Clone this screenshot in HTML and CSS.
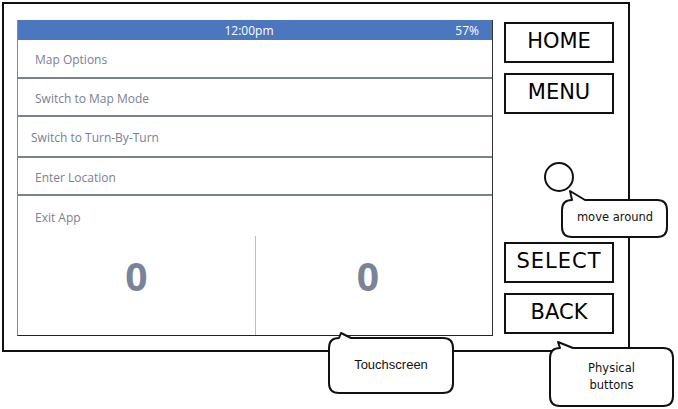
FILE: index.html
```html
<!DOCTYPE html>
<html>
<head>
<meta charset="utf-8">
<link rel="stylesheet" href="styles.css">
</head>
<body>
<div class="page">
  <div class="device">
    <div class="screen">
      <div class="status">
        <span class="time">12:00pm</span>
        <span class="battery">57%</span>
      </div>
      <div class="row r1">Map Options</div>
      <div class="row r2">Switch to Map Mode</div>
      <div class="row r3 tight">Switch to Turn-By-Turn</div>
      <div class="row r4">Enter Location</div>
      <div class="row r5 last">Exit App</div>
      <div class="counters">
        <div class="cell">0</div>
        <div class="cell right">0</div>
      </div>
    </div>
    <div class="buttons">
      <div class="btn">HOME</div>
      <div class="btn">MENU</div>
      <div class="knob"></div>
      <div class="btn select">SELECT</div>
      <div class="btn">BACK</div>
    </div>
  </div>

  <div class="callout c-touch">
    <svg class="bubble" width="128" height="64" viewBox="0 0 128 64"><path d="M12,6 L14,1 L24,6 H116 Q126,6 126,16 V51 Q126,61 116,61 H12 Q2,61 2,51 V16 Q2,6 12,6 Z"/></svg>
    <span class="ctext sans">Touchscreen</span>
  </div>

  <div class="callout c-move">
    <svg class="bubble" width="110" height="50" viewBox="0 0 110 50"><path d="M2,21 Q2,11 12,11 L10,2 L25,11 H97 Q107,11 107,21 V38 Q107,48 97,48 H12 Q2,48 2,38 Z"/></svg>
    <span class="ctext hand">move around</span>
  </div>

  <div class="callout c-phys">
    <svg class="bubble" width="127" height="68" viewBox="0 0 127 68"><path d="M2,18 Q2,8 12,8 L10,2 L25,8 H115 Q125,8 125,18 V56 Q125,66 115,66 H12 Q2,66 2,56 Z"/></svg>
    <span class="ctext hand">Physical<br>buttons</span>
  </div>
</div>
</body>
</html>
```

FILE: styles.css
```css
* { box-sizing: border-box; }
html, body { margin: 0; padding: 0; background: #fff; }
.page { position: relative; width: 678px; height: 409px; overflow: hidden; }

.device {
  margin: 2px 0 0 2px;
  width: 628px;
  height: 350px;
  border: 2px solid #111;
  padding: 16px 0 0 13px;
  display: flex;
  align-items: flex-start;
}

.screen {
  width: 476px;
  height: 316px;
  border-left: 1px solid #8a8a8a;
  border-right: 1px solid #333;
  border-bottom: 1px solid #222;
  display: flex;
  flex-direction: column;
  font-family: "Open Sans", "Liberation Sans", sans-serif;
}

.status {
  height: 20px;
  flex: none;
  background: #4a77be;
  color: #fff;
  font-size: 12px;
  display: flex;
  align-items: center;
  justify-content: center;
  position: relative;
  padding-right: 12px;
}
.battery { position: absolute; right: 13px; top: 2px; }

.row {
  flex: none;
  display: flex;
  align-items: center;
  padding-left: 17px;
  padding-top: 2px;
  font-size: 12px;
  color: #788196;
  border-bottom: 2px solid #7a8193;
}
.r1 { height: 39px; }
.r2 { height: 38px; }
.r3 { height: 41px; }
.r4 { height: 38px; }
.r5 { height: 40px; }
.tight { padding-left: 13px; }
.last { border-bottom: none; }

.counters {
  flex: 1;
  display: grid;
  grid-template-columns: 237px 1fr;
}
.cell {
  font-size: 39px;
  font-weight: 700;
  line-height: 1;
  color: #7a8499;
  text-align: center;
  padding-top: 20px;
}
.cell.right { border-left: 1px solid #bdbdbd; padding-right: 12px; }

.buttons {
  margin-left: 11px;
  padding-top: 2px;
  width: 110px;
  display: flex;
  flex-direction: column;
  align-items: center;
}
.btn {
  width: 110px;
  height: 41px;
  border: 2px solid #111;
  display: flex;
  align-items: center;
  justify-content: center;
  padding-bottom: 3px;
  font-family: "DejaVu Sans", "Liberation Sans", sans-serif;
  font-size: 21px;
  color: #000;
}
.btn + .btn { margin-top: 10px; }
.select { letter-spacing: 1px; }
.knob {
  width: 30px;
  height: 30px;
  border: 2px solid #111;
  border-radius: 50%;
  margin: 48px 0 50px;
}

.callout { position: absolute; }
.bubble { position: absolute; left: 0; top: 0; }
.bubble path { fill: #fff; stroke: #111; stroke-width: 2; stroke-linejoin: round; }
.ctext {
  position: absolute;
  left: 0; right: 0;
  text-align: center;
  color: #111;
}
.sans { font-family: "Liberation Sans", Arial, sans-serif; font-size: 13px; }
.hand { font-family: "DejaVu Sans", "Liberation Sans", sans-serif; font-size: 11.5px; line-height: 17px; }

.c-touch { left: 327px; top: 332px; width: 128px; height: 64px; }
.c-touch .ctext { top: 25px; }
.c-move { left: 560px; top: 189px; width: 110px; height: 50px; }
.c-move .ctext { top: 20px; }
.c-phys { left: 548px; top: 340px; width: 127px; height: 68px; }
.c-phys .ctext { top: 20px; }
```
